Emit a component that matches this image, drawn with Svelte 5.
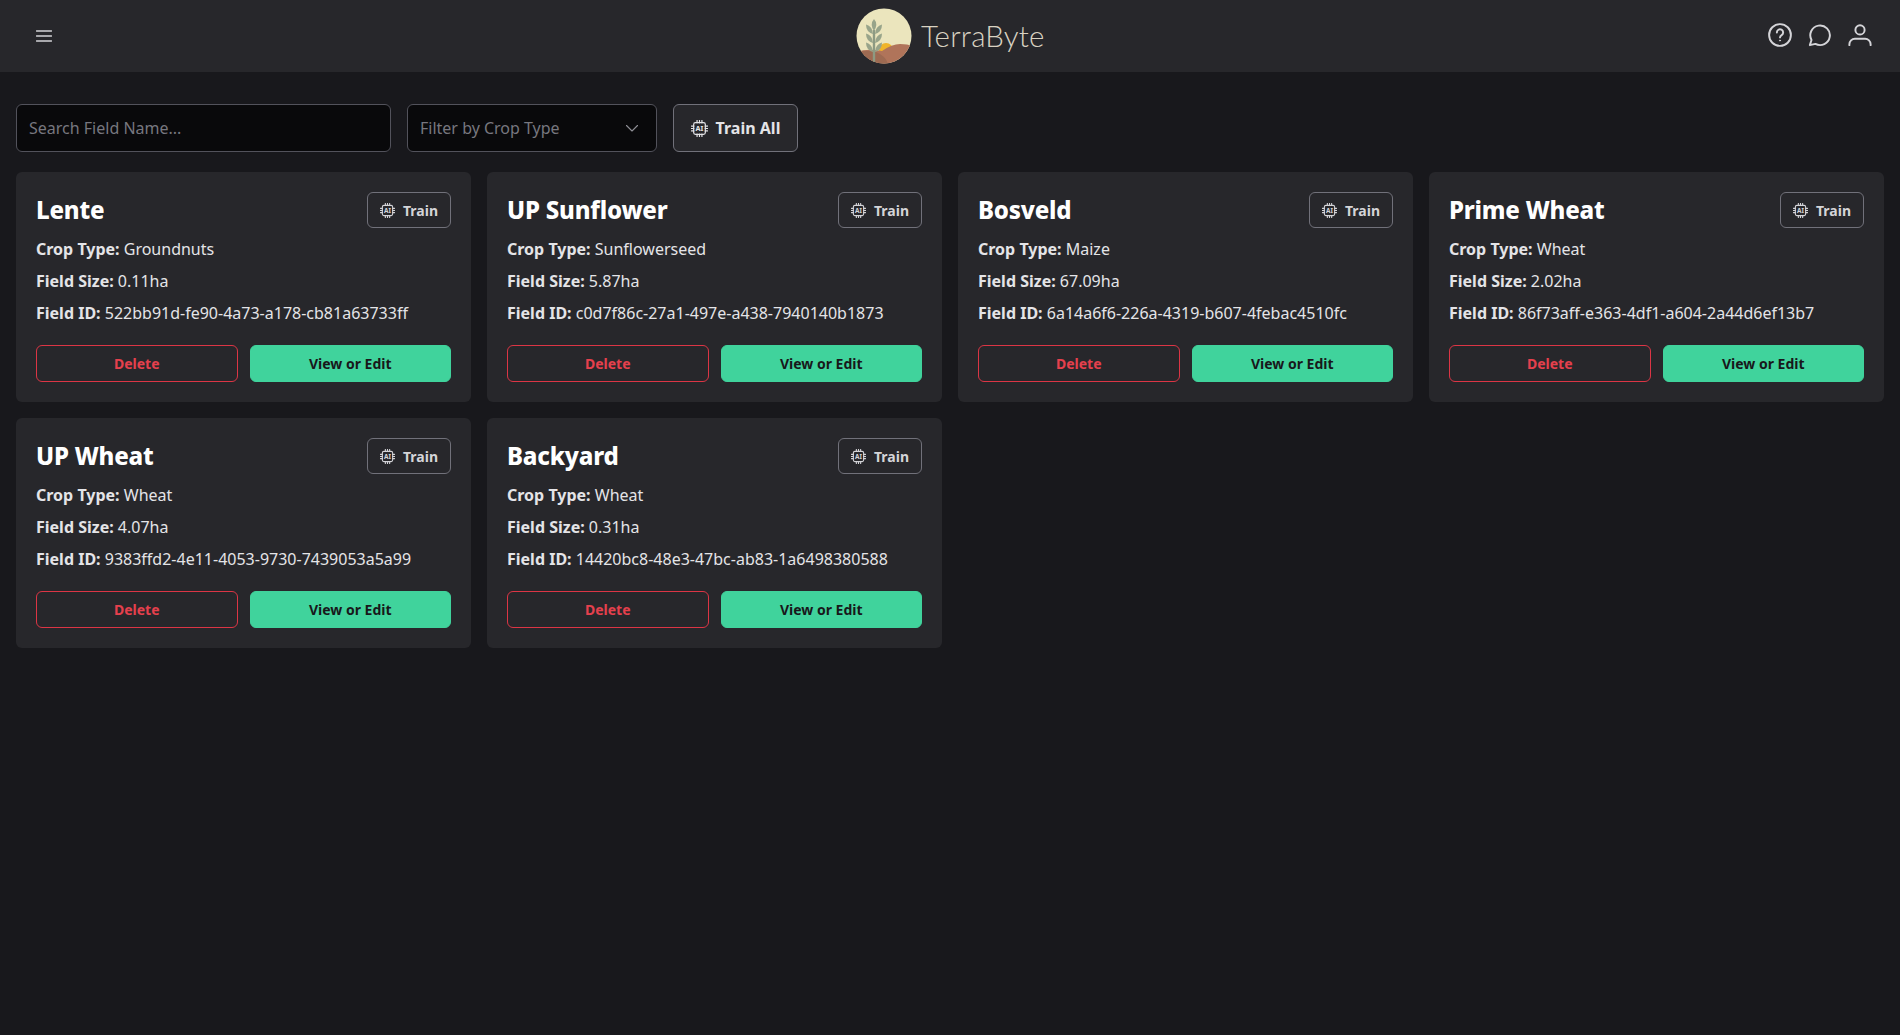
<script>
  const fields = [
    { name: 'Lente', crop: 'Groundnuts', size: '0.11ha', id: '522bb91d-fe90-4a73-a178-cb81a63733ff' },
    { name: 'UP Sunflower', crop: 'Sunflowerseed', size: '5.87ha', id: 'c0d7f86c-27a1-497e-a438-7940140b1873' },
    { name: 'Bosveld', crop: 'Maize', size: '67.09ha', id: '6a14a6f6-226a-4319-b607-4febac4510fc' },
    { name: 'Prime Wheat', crop: 'Wheat', size: '2.02ha', id: '86f73aff-e363-4df1-a604-2a44d6ef13b7' },
    { name: 'UP Wheat', crop: 'Wheat', size: '4.07ha', id: '9383ffd2-4e11-4053-9730-7439053a5a99' },
    { name: 'Backyard', crop: 'Wheat', size: '0.31ha', id: '14420bc8-48e3-47bc-ab83-1a6498380588' }
  ]
</script>

{#snippet chip()}
  <svg class="chip" viewBox="1.5 1.5 21 21" fill="none" stroke="currentColor" stroke-width="1.5" stroke-linecap="round">
    <rect x="4.8" y="4.8" width="14.4" height="14.4" rx="2.2" />
    <path d="M9 2v3M12 2v3M15 2v3M9 19v3M12 19v3M15 19v3M2 9h3M2 12h3M2 15h3M19 9h3M19 12h3M19 15h3" />
    <text x="12" y="15.2" text-anchor="middle" class="chip-text">AI</text>
  </svg>
{/snippet}

<header class="topbar">
  <button class="icon-btn menu" aria-label="Menu">
    <svg width="16" height="16" viewBox="0 0 16 16" fill="none" stroke="currentColor" stroke-width="1.5" stroke-linecap="round">
      <path d="M0.5 3h15M0.5 8h15M0.5 13h15" />
    </svg>
  </button>
  <div class="brand">
    <svg class="logo" viewBox="0 0 56 56">
      <defs><clipPath id="disc"><circle cx="28" cy="28" r="27.5" /></clipPath></defs>
      <g clip-path="url(#disc)">
        <rect width="56" height="56" fill="#ebe5bd" />
        <circle cx="30" cy="42" r="7" fill="#f0b429" />
        <path d="M0 44 Q12 40 26 43 Q36 36 44 36 Q52 36 56 38 V56 H0Z" fill="#b0745a" />
        <path d="M0 44 Q12 42 20 44 Q30 48 32 56 H0Z" fill="#9d6a52" />
        <path d="M18 22v34" stroke="#8d9a82" stroke-width="2.4" />
        <g fill="#98a48a">
          <path d="M18 11 Q22.5 16 18 23 Q13.5 16 18 11Z" />
          <path d="M17 26 Q10 24 10 16.5 Q16.5 18 17 26Z" />
          <path d="M19 26 Q26 24 26 16.5 Q19.5 18 19 26Z" />
          <path d="M17 35 Q10 33 10 25.5 Q16.5 27 17 35Z" />
          <path d="M19 35 Q26 33 26 25.5 Q19.5 27 19 35Z" />
          <path d="M17 44 Q10 42 10 34.5 Q16.5 36 17 44Z" />
          <path d="M19 44 Q26 42 26 34.5 Q19.5 36 19 44Z" />
        </g>
      </g>
    </svg>
    <span class="brand-name">TerraByte</span>
  </div>
  <div class="top-actions">
    <button class="icon-btn" aria-label="Help">
      <svg width="24" height="24" viewBox="0 0 26 26" fill="none" stroke="currentColor" stroke-width="2.1" stroke-linecap="round">
        <circle cx="13" cy="13" r="11.8" />
        <path d="M9.6 10.2a3.4 3.4 0 1 1 5.2 2.9c-1.1.7-1.8 1.3-1.8 2.5" />
        <circle cx="13" cy="19" r="0.6" fill="currentColor" stroke-width="1" />
      </svg>
    </button>
    <button class="icon-btn" aria-label="Chat">
      <svg width="24" height="24" viewBox="0 0 26 26" fill="none" stroke="currentColor" stroke-width="2.1" stroke-linejoin="round">
        <path d="M2 24l1.8-5.6A10.6 10.6 0 1 1 8 22.6Z" />
      </svg>
    </button>
    <button class="icon-btn" aria-label="Account">
      <svg width="24" height="24" viewBox="0 0 26 26" fill="none" stroke="currentColor" stroke-width="2.1" stroke-linecap="round">
        <circle cx="13" cy="7.5" r="5" />
        <path d="M1.5 24v-1a6 6 0 0 1 6-6h11a6 6 0 0 1 6 6v1" />
      </svg>
    </button>
  </div>
</header>

<main class="page">
  <div class="filters">
    <input class="search" type="text" placeholder="Search Field Name..." />
    <div class="select">
      <span>Filter by Crop Type</span>
      <svg width="16" height="16" viewBox="0 0 16 16" fill="none" stroke="currentColor" stroke-width="1.1" stroke-linecap="round" stroke-linejoin="round">
        <path d="M2.5 5.5 8 11l5.5-5.5" />
      </svg>
    </div>
    <button class="train-all">{@render chip()} Train All</button>
  </div>

  <div class="grid">
    {#each fields as f}
      <section class="card">
        <div class="card-head">
          <h2>{f.name}</h2>
          <button class="train">{@render chip()} Train</button>
        </div>
        <p><b>Crop Type:</b> {f.crop}</p>
        <p><b>Field Size:</b> {f.size}</p>
        <p><b>Field ID:</b> {f.id}</p>
        <div class="card-actions">
          <button class="delete">Delete</button>
          <button class="edit">View or Edit</button>
        </div>
      </section>
    {/each}
  </div>
</main>

<style>
  :global(body) {
    background: #18181c;
    color: #e4e4e7;
    font-family: "Noto Sans", sans-serif;
    min-height: 1035px;
  }

  button {
    font-family: inherit;
    cursor: pointer;
  }

  .topbar {
    height: 72px;
    background: #27272b;
    display: flex;
    align-items: center;
    justify-content: space-between;
    padding: 0 28px 0 36px;
    position: relative;
  }

  .icon-btn {
    background: none;
    border: none;
    padding: 0;
    color: #d4d4d8;
    display: flex;
  }

  .brand {
    position: absolute;
    left: 856px;
    top: 8px;
    display: flex;
    align-items: center;
    gap: 9px;
  }

  .logo {
    width: 56px;
    height: 56px;
    display: block;
  }

  .brand-name {
    font-family: "Lato", sans-serif;
    font-weight: 300;
    font-size: 29.5px;
    letter-spacing: 0.2px;
    color: #d9d2c2;
    margin-top: -2px;
  }

  .top-actions {
    display: flex;
    gap: 16px;
    margin-top: -2px;
  }

  .page {
    padding: 32px 16px 16px;
  }

  .filters {
    display: flex;
    gap: 16px;
    margin-bottom: 20px;
  }

  .search,
  .select {
    height: 48px;
    box-sizing: border-box;
    background: #09090b;
    border: 1px solid #52525b;
    border-radius: 6px;
    padding: 0 12px;
    font-family: inherit;
    font-size: 16px;
    color: #77777f;
  }

  .search {
    width: 375px;
    outline: none;
  }

  .search::placeholder {
    color: #77777f;
    opacity: 1;
  }

  .select {
    width: 250px;
    display: flex;
    align-items: center;
    justify-content: space-between;
  }

  .select svg {
    color: #8f8f96;
    margin-right: 4px;
  }

  .train-all {
    width: 125px;
    height: 48px;
    display: flex;
    align-items: center;
    justify-content: center;
    gap: 8px;
    background: #27272b;
    border: 1px solid #71717a;
    border-radius: 6px;
    color: #e4e4e7;
    font-size: 16px;
    font-weight: 700;
    padding: 0;
  }

  .chip {
    width: 17px;
    height: 17px;
    flex: none;
  }

  .chip-text {
    font-family: "Noto Sans", sans-serif;
    font-size: 9px;
    font-weight: 700;
    fill: currentColor;
    stroke: none;
  }

  .grid {
    display: grid;
    grid-template-columns: repeat(4, 1fr);
    gap: 16px;
  }

  .card {
    background: #27272b;
    border-radius: 6px;
    padding: 20px;
  }

  .card-head {
    display: flex;
    align-items: center;
    justify-content: space-between;
    margin-bottom: 9px;
  }

  h2 {
    margin: 0;
    font-size: 24px;
    line-height: 36px;
    font-weight: 800;
    letter-spacing: -0.2px;
    color: #fff;
  }

  .train {
    width: 84px;
    height: 36px;
    display: flex;
    align-items: center;
    justify-content: center;
    gap: 8px;
    background: none;
    border: 1px solid #71717a;
    border-radius: 6px;
    color: #d4d4d8;
    font-size: 14px;
    font-weight: 700;
    padding: 0;
  }

  .train .chip {
    width: 15px;
    height: 15px;
  }

  p {
    margin: 0 0 8px;
    font-size: 16px;
    line-height: 24px;
    color: #e4e4e7;
  }

  .card-actions {
    display: grid;
    grid-template-columns: 1fr 1fr;
    gap: 12px;
    margin-top: 20px;
  }

  .card-actions button {
    height: 37px;
    border-radius: 6px;
    font-size: 14px;
    font-weight: 700;
    padding: 0;
  }

  .delete {
    background: none;
    border: 1px solid #dc3545;
    color: #e5404d;
  }

  .edit {
    background: #40d39c;
    border: 1px solid #40d39c;
    color: #18181b;
  }
</style>
